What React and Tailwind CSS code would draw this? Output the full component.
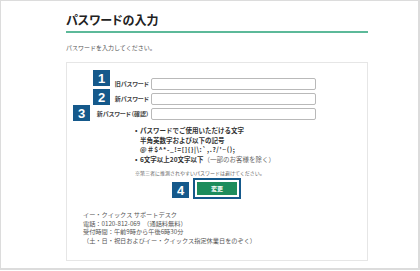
import React from 'react';

const Badge = ({ n, className }) => (
  <div
    className={`absolute flex h-[16px] w-[17px] items-center justify-center bg-[#15598b] font-['Liberation_Sans',sans-serif] text-[13px] font-bold leading-none text-white ${className}`}
  >
    {n}
  </div>
);

const Row = ({ label }) => (
  <div className="flex h-[12px] items-center">
    <div className="w-[84px] pr-[2px] text-right text-[6px] font-bold leading-none text-[#444] [font-feature-settings:'palt']">
      {label}
    </div>
    <div className="h-[12px] w-[165px] rounded-[2px] border border-[#b9b9b9] bg-white" />
  </div>
);

const App = () => {
  return (
    <div className="h-[271px] w-[420px] bg-white">
      <div className="h-[270px] w-[420px] border-t border-l border-r-2 border-b-2 border-[#dcdcdc] font-['Noto_Sans_CJK_JP',sans-serif]">
        <div className="ml-[65px] w-[302px]">
          <h1 className="pt-[11px] text-[12px] font-bold leading-[16px] text-[#222] [font-feature-settings:'palt']">
            パスワードの入力
          </h1>
          <div className="mt-[3px] h-[2px] bg-[#5cb999]" />
          <p className="mt-[11px] text-[6px] leading-[8px] text-[#555]">パスワードを入力してください。</p>

          <div className="relative mt-[10px] h-[199px] border border-[#e6e6e6]">
            <Badge n="1" className="left-[26px] top-[7px]" />
            <Badge n="2" className="left-[26px] top-[26px]" />
            <Badge n="3" className="left-[6px] top-[42px]" />
            <Badge n="4" className="left-[105px] top-[119px]" />

            <div className="flex flex-col gap-[3px] pt-[15px]">
              <Row label="旧パスワード" />
              <Row label="新パスワード" />
              <Row label="新パスワード（確認）" />
            </div>

            <div className="ml-[68px] mt-[6px] text-[6.5px] font-bold leading-[9.5px] text-[#333]">
              <div className="flex">
                <span className="w-[5px]">•</span>
                <div>
                  <div>パスワードでご使用いただける文字</div>
                  <div>半角英数字および以下の記号</div>
                  <div className="tracking-[0.6px]">@＃$^*-_!=[]{'{}'}|\:`,.?/'~();</div>
                </div>
              </div>
              <div className="flex">
                <span className="w-[5px]">•</span>
                <div>
                  6文字以上20文字以下<span className="font-normal text-[#666]">（一部のお客様を除く）</span>
                </div>
              </div>
            </div>

            <p className="ml-[68px] mt-[6px] text-[5px] leading-[6px] text-[#666]">
              ※第三者に推測されやすいパスワードは避けてください。
            </p>

            <div className="mt-[2px] flex justify-center">
              <div className="flex h-[21px] w-[48px] items-center justify-center border-2 border-[#15598b] bg-white">
                <button
                  type="button"
                  className="flex h-[13px] w-[40px] items-center justify-center bg-[#1d8c5c] text-[6px] font-bold leading-none text-white"
                >
                  変更
                </button>
              </div>
            </div>

            <div className="ml-[16px] mt-[12px] text-[6.2px] leading-[8.7px] text-[#555]">
              <div>イー・クイックス サポートデスク</div>
              <div>電話：0120-812-069　（通話料無料）</div>
              <div>受付時間：午前9時から午後6時30分</div>
              <div>（土・日・祝日およびイー・クイックス指定休業日をのぞく）</div>
            </div>
          </div>
        </div>
      </div>
    </div>
  );
};

export default App;
